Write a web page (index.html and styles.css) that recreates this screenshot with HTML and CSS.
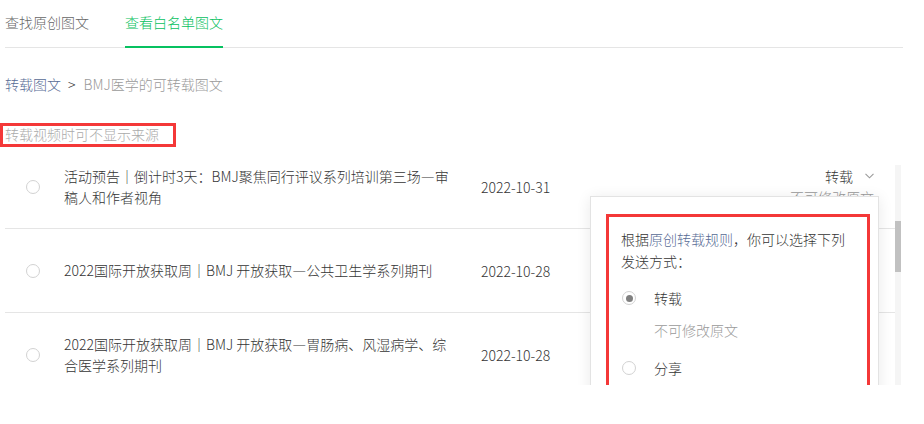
FILE: index.html
```html
<!DOCTYPE html>
<html lang="zh-CN">
<head>
<meta charset="utf-8">
<link rel="stylesheet" href="styles.css">
</head>
<body>
<div class="page">
  <div class="tabs">
    <div class="tab">查找原创图文</div>
    <div class="tab active">查看白名单图文</div>
  </div>
  <div class="crumb"><span class="link">转载图文</span><span class="sep">&gt;</span><span class="cur">BMJ医学的可转载图文</span></div>
  <div class="note">转载视频时可不显示来源</div>
  <div class="list-wrap">
    <div class="viewport">
      <div class="rows">
        <div class="row">
          <span class="radio"></span>
          <div class="title">活动预告｜倒计时3天：BMJ聚焦同行评议系列培训第三场—审稿人和作者视角</div>
          <div class="date">2022-10-31</div>
          <div class="mode">
            <div class="mode-sel">转载<svg class="chev" width="9" height="6" viewBox="0 0 9 6"><path d="M0.5 0.8 L4.5 4.8 L8.5 0.8" fill="none" stroke="#9a9a9a" stroke-width="1.1"/></svg></div>
            <div class="mode-sub">不可修改原文</div>
          </div>
        </div>
        <div class="row">
          <span class="radio"></span>
          <div class="title">2022国际开放获取周｜BMJ 开放获取—公共卫生学系列期刊</div>
          <div class="date">2022-10-28</div>
        </div>
        <div class="row">
          <span class="radio"></span>
          <div class="title">2022国际开放获取周｜BMJ 开放获取—胃肠病、风湿病学、综合医学系列期刊</div>
          <div class="date">2022-10-28</div>
        </div>
      </div>
      <div class="popover">
        <div class="pop-desc">
          <div class="pop-line"><span>根据</span><a class="link">原创转载规则</a><span>，你可以选择下列</span></div>
          <div class="pop-line">发送方式：</div>
        </div>
        <div class="opt"><span class="radio checked"></span><span>转载</span></div>
        <div class="opt-sub">不可修改原文</div>
        <div class="opt opt2"><span class="radio"></span><span>分享</span></div>
      </div>
    </div>
    <div class="scrollbar"><div class="thumb"></div></div>
  </div>
  <span class="mark mark-note"></span>
  <span class="mark mark-pop"></span>
</div>
</body>
</html>
```
FILE: styles.css
```css
* { box-sizing: border-box; }
html, body { margin: 0; padding: 0; background: #fff; }
body {
  font-family: "Noto Sans CJK SC", "Noto Sans", sans-serif;
  font-size: 14px;
  font-weight: 300;
  color: #353535;
}
.page {
  position: relative;
  width: 903px;
  padding-left: 5px;
}
.tabs {
  display: flex;
  gap: 36px;
  height: 48px;
  border-bottom: 1px solid #e5e5e5;
}
.tab {
  line-height: 22px;
  padding: 11px 0 13px;
  color: #666;
  margin-bottom: -1px;
}
.tab.active {
  color: #07c160;
  border-bottom: 2px solid #07c160;
}
.crumb {
  margin-top: 25px;
  line-height: 22px;
  display: flex;
}
.link { color: #576b95; text-decoration: none; }
.crumb .sep { color: #353535; margin: 0 8px 0 7px; }
.crumb .cur { color: #9a9a9a; }
.note {
  margin-top: 28px;
  line-height: 22px;
  color: #aaa;
}
.list-wrap {
  margin-top: 20px;
  display: flex;
  width: 896px;
  height: 220px;
}
.viewport {
  flex: 1;
  position: relative;
  overflow: hidden;
}
.rows { margin-top: -20px; }
.row {
  display: flex;
  align-items: center;
  height: 84px;
  border-bottom: 1px solid #e5e5e5;
  padding-left: 21px;
}
.radio {
  flex: none;
  width: 14px;
  height: 14px;
  border: 1px solid #d2d2d2;
  border-radius: 50%;
  display: flex;
  align-items: center;
  justify-content: center;
}
.row .radio { margin-right: 24px; }
.title {
  width: 395px;
  line-height: 21px;
}
.date { margin-left: 22px; }
.mode {
  margin-left: auto;
  padding-right: 21px;
  text-align: right;
  line-height: 21px;
}
.mode-sel { display: flex; align-items: center; justify-content: flex-end; }
.chev { margin-left: 12px; }
.mode-sub { color: #9a9a9a; }
.scrollbar {
  width: 6px;
  background: #f5f5f5;
}
.thumb {
  margin-top: 56px;
  height: 51px;
  background: #c1c1c1;
}
.popover {
  position: absolute;
  left: 585px;
  top: 31px;
  width: 289px;
  height: 240px;
  background: #fff;
  border: 1px solid #e3e3e3;
  box-shadow: 0 2px 14px rgba(0, 0, 0, 0.09);
  padding: 31px 30px 0 30px;
}
.pop-line { line-height: 22px; white-space: nowrap; }
.opt {
  display: flex;
  align-items: center;
  gap: 18px;
  margin-top: 15px;
  line-height: 22px;
  padding-left: 1px;
}
.opt-sub {
  margin-top: 10px;
  line-height: 22px;
  padding-left: 33px;
  color: #9a9a9a;
}
.opt.opt2 { margin-top: 16px; }
.radio.checked::after {
  content: "";
  width: 7px;
  height: 7px;
  border-radius: 50%;
  background: #808080;
}
.mark {
  position: absolute;
  border: 3px solid #f43838;
}
.mark-note { left: 0; top: 123px; width: 176px; height: 24px; }
.mark-pop { left: 606px; top: 214px; width: 264px; height: 178px; }
```
